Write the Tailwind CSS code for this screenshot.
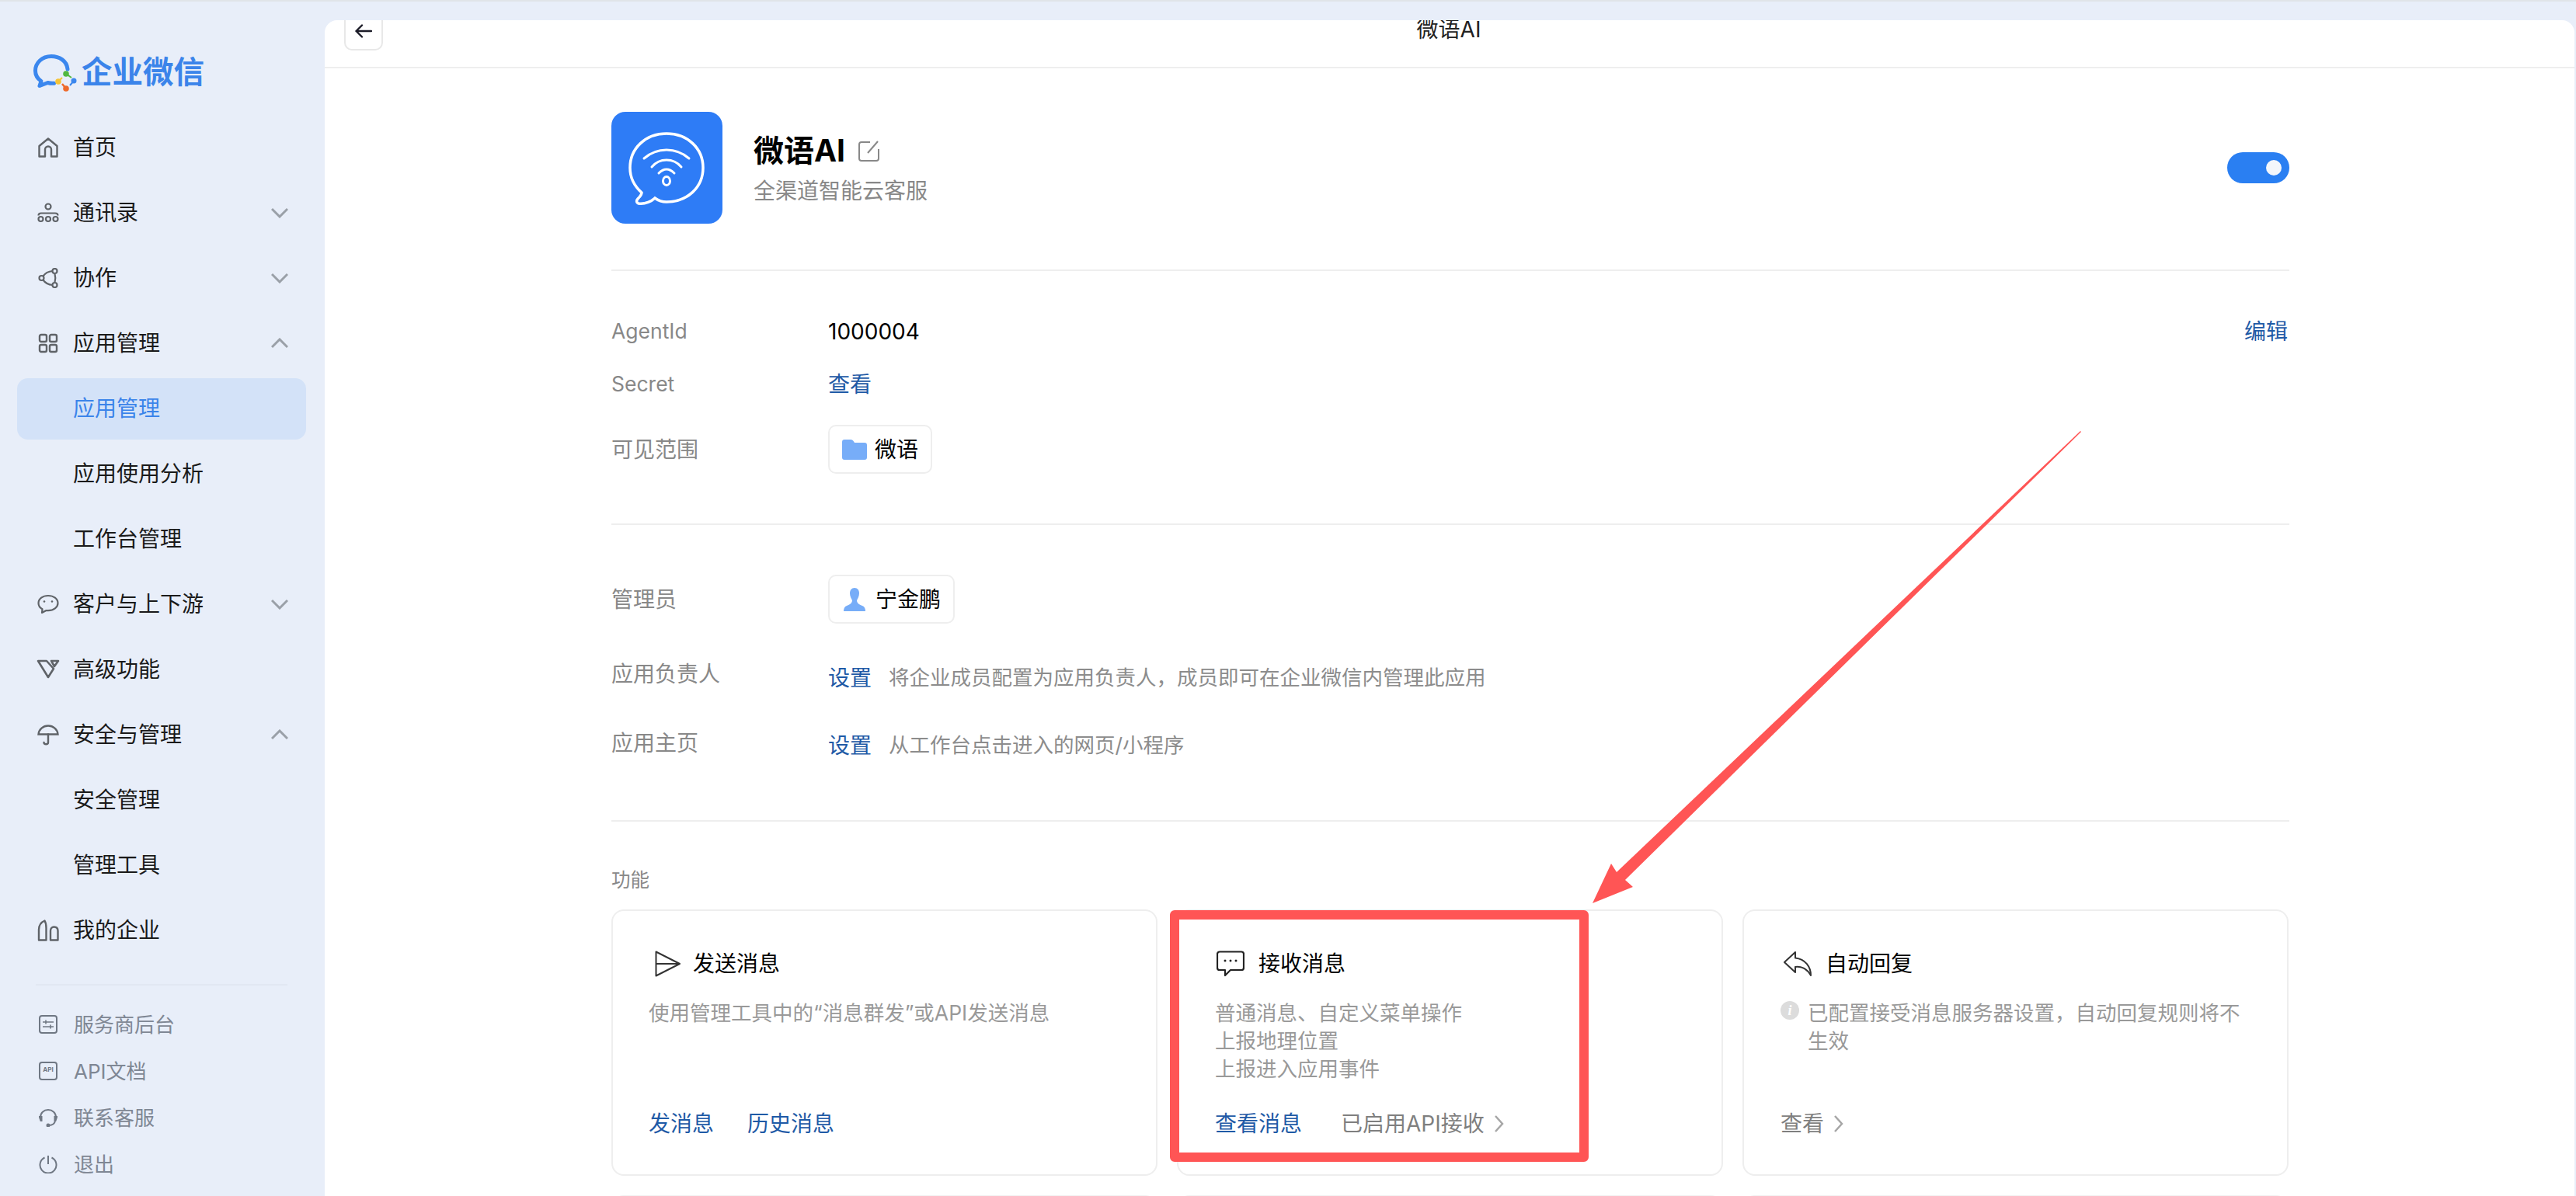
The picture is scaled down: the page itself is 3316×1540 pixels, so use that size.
<!DOCTYPE html>
<html lang="zh-CN">
<head>
    <meta charset="UTF-8">
    <title>企业微信 - 微语AI</title>
    <script src="https://cdn.jsdelivr.net/npm/@tailwindcss/browser@4"></script>
</head>
<body class="w-[3316px] h-[1540px] overflow-hidden relative bg-[#e8eef9] text-[#1a1a1a] [font-family:Inter,'Noto_Sans_CJK_SC',sans-serif]">
    <div class="h-[2px] bg-[#e0e4e8]"></div>
    <div class="flex h-[1538px]">

        <!-- sidebar -->
        <aside class="w-[418px] shrink-0">
            <div class="h-[146px] pl-[40px] pt-[66px] flex items-start">
                <svg class="w-[60px] h-[52px] shrink-0" viewBox="0 0 60 52" fill="none">
                    <path d="M47 21C46 10 36 4.500 26 4.500C14 4.500 5.500 13 5.500 23C5.500 29 8.500 33.500 13 36.500L11 42.500L21.500 38.500C24 39.200 27 39.500 29.500 39.200" stroke="#3b87ee" stroke-width="5" stroke-linecap="round" stroke-linejoin="round"/>
                    <path d="M45 27L52 32" stroke="#52b840" stroke-width="2"/><circle cx="45" cy="27" r="3.800" fill="#52b840"/>
                    <path d="M55 36L50 42" stroke="#3b87ee" stroke-width="2"/><circle cx="55" cy="36" r="3.500" fill="#3b87ee"/>
                    <path d="M35 37L40 32" stroke="#f5c438" stroke-width="2"/><circle cx="35" cy="37" r="3.800" fill="#f5c438"/>
                    <path d="M45 46L40 40" stroke="#ee6a2b" stroke-width="2.500"/><circle cx="45" cy="46" r="3.800" fill="#ee6a2b"/>
                </svg>
                <span class="ml-[5px] text-[39.500px] leading-[50px] font-semibold text-[#3b84ea]">企业微信</span>
            </div>

            <nav class="text-[28px]">
                <a class="h-[84px] pl-[49px] flex items-center gap-[19px]">
                    <svg class="w-[26px] h-[26px]" viewBox="0 0 26 26" fill="none" stroke="#5f6368" stroke-width="2.400" stroke-linejoin="round"><path d="M1.500 11L13 1.500L24.500 11V24.500H17V15.500A4 4 0 0 0 9 15.500V24.500H1.500Z"/></svg>
                    <span>首页</span>
                </a>
                <a class="h-[84px] pl-[49px] pr-[47px] flex items-center gap-[19px]">
                    <svg class="w-[28px] h-[26px] -ml-[1px] -mr-[1px]" viewBox="0 0 28 26" fill="none" stroke="#5f6368" stroke-width="2.200"><circle cx="14" cy="5" r="3.500"/><circle cx="4.500" cy="21" r="3"/><circle cx="14" cy="21" r="3"/><circle cx="23.500" cy="21" r="3"/><path d="M1.500 16.500C1.500 14.500 3 13.500 5 13.500H23C25 13.500 26.500 14.500 26.500 16.500"/></svg>
                    <span>通讯录</span>
                    <svg class="w-[22px] h-[14px] ml-auto" viewBox="0 0 22 14" fill="none" stroke="#9aa0a8" stroke-width="3"><path d="M1 2L11 12L21 2"/></svg>
                </a>
                <a class="h-[84px] pl-[49px] pr-[47px] flex items-center gap-[19px]">
                    <svg class="w-[26px] h-[26px]" viewBox="0 0 26 26" fill="none" stroke="#5f6368" stroke-width="2.200"><circle cx="4.500" cy="13" r="3"/><circle cx="21.500" cy="4" r="3"/><circle cx="21.500" cy="22" r="3"/><path d="M6.500 10.500C9 7 13 4.500 18.500 4M6.500 15.500C9 19 13 21.500 18.500 22M21.500 7.500C22.500 11 22.500 15 21.500 18.500"/></svg>
                    <span>协作</span>
                    <svg class="w-[22px] h-[14px] ml-auto" viewBox="0 0 22 14" fill="none" stroke="#9aa0a8" stroke-width="3"><path d="M1 2L11 12L21 2"/></svg>
                </a>
                <a class="h-[84px] pl-[49px] pr-[47px] flex items-center gap-[19px]">
                    <svg class="w-[26px] h-[26px]" viewBox="0 0 26 26" fill="none" stroke="#5f6368" stroke-width="2.400"><rect x="2" y="2" width="9" height="9" rx="2"/><rect x="15" y="2" width="9" height="9" rx="2"/><rect x="2" y="15" width="9" height="9" rx="2"/><rect x="15" y="15" width="9" height="9" rx="2"/></svg>
                    <span>应用管理</span>
                    <svg class="w-[22px] h-[14px] ml-auto" viewBox="0 0 22 14" fill="none" stroke="#9aa0a8" stroke-width="3"><path d="M1 12L11 2L21 12"/></svg>
                </a>
                <div class="h-[84px] flex items-center">
                    <a class="w-[372px] h-[79px] ml-[22px] pl-[72px] flex items-center rounded-[14px] bg-[#d3e2f8] text-[#3b84ea]">应用管理</a>
                </div>
                <a class="h-[84px] pl-[94px] flex items-center">应用使用分析</a>
                <a class="h-[84px] pl-[94px] flex items-center">工作台管理</a>
                <a class="h-[84px] pl-[49px] pr-[47px] flex items-center gap-[19px]">
                    <svg class="w-[28px] h-[26px] -ml-[1px] -mr-[1px]" viewBox="0 0 28 26" fill="none" stroke="#5f6368" stroke-width="2.200" stroke-linejoin="round"><path d="M14 2C7 2 1.500 6 1.500 11.500C1.500 15 3.800 17.800 6.500 19.300L6 24L11.500 21C12.300 21.100 13.100 21.200 14 21.200C21 21.200 26.500 17 26.500 11.500C26.500 6 21 2 14 2Z"/><circle cx="9" cy="9.500" r="1.300" fill="#5f6368" stroke="none"/><circle cx="19" cy="9.500" r="1.300" fill="#5f6368" stroke="none"/></svg>
                    <span>客户与上下游</span>
                    <svg class="w-[22px] h-[14px] ml-auto" viewBox="0 0 22 14" fill="none" stroke="#9aa0a8" stroke-width="3"><path d="M1 2L11 12L21 2"/></svg>
                </a>
                <a class="h-[84px] pl-[49px] flex items-center gap-[19px]">
                    <svg class="w-[30px] h-[26px] -ml-[2px] -mr-[2px]" viewBox="0 0 30 26" fill="none" stroke="#5f6368" stroke-width="2.600" stroke-linejoin="round"><path d="M2 2H13L22 12L15 23ZM19 2H28L23 9Z"/></svg>
                    <span>高级功能</span>
                </a>
                <a class="h-[84px] pl-[49px] pr-[47px] flex items-center gap-[19px]">
                    <svg class="w-[28px] h-[28px] -ml-[1px] -mr-[1px]" viewBox="0 0 28 28" fill="none" stroke="#5f6368" stroke-width="2.400" stroke-linecap="round"><path d="M1.500 13.500C2 7 7.500 2.500 14 2.500C20.500 2.500 26 7 26.500 13.500Z"/><path d="M14 13.500V24C14 27 8.500 27 8.500 24"/></svg>
                    <span>安全与管理</span>
                    <svg class="w-[22px] h-[14px] ml-auto" viewBox="0 0 22 14" fill="none" stroke="#9aa0a8" stroke-width="3"><path d="M1 12L11 2L21 12"/></svg>
                </a>
                <a class="h-[84px] pl-[94px] flex items-center">安全管理</a>
                <a class="h-[84px] pl-[94px] flex items-center">管理工具</a>
                <a class="h-[84px] pl-[49px] flex items-center gap-[19px]">
                    <svg class="w-[28px] h-[28px] -ml-[1px] -mr-[1px]" viewBox="0 0 28 28" fill="none" stroke="#5f6368" stroke-width="2.400" stroke-linejoin="round"><path d="M2 26.500V13C2 8 5 3.500 9.500 1.500C11 4 11.500 7 11.500 11V26.500Z"/><path d="M17 26.500V14.500C17 11.500 19 9.500 21.500 9.500C24.500 9.500 26.500 11.500 26.500 14.500V26.500Z"/></svg>
                    <span>我的企业</span>
                </a>
            </nav>

            <div class="h-[2px] mt-[27px] ml-[46px] w-[324px] bg-[#e1e7f2]"></div>

            <div class="mt-[20px] text-[26px] text-[#7f8794]">
                <a class="h-[60px] pl-[50px] flex items-center gap-[21px]">
                    <svg class="w-[24px] h-[24px]" viewBox="0 0 24 24" fill="none" stroke="#6f7783" stroke-width="2"><rect x="1" y="1" width="22" height="22" rx="3"/><path d="M5 9H19M5 15H19M9 6.500V11.500M15 12.500V17.500" stroke-width="1.600"/></svg>
                    <span>服务商后台</span>
                </a>
                <a class="h-[60px] pl-[50px] flex items-center gap-[21px]">
                    <svg class="w-[24px] h-[24px]" viewBox="0 0 24 24" fill="none"><rect x="1" y="1" width="22" height="22" rx="3" stroke="#6f7783" stroke-width="2"/><text x="12" y="13" text-anchor="middle" font-size="8" font-weight="700" fill="#6f7783" font-family="Inter">API</text></svg>
                    <span>API文档</span>
                </a>
                <a class="h-[60px] pl-[50px] flex items-center gap-[21px]">
                    <svg class="w-[24px] h-[24px]" viewBox="0 0 24 24" fill="none" stroke="#6f7783" stroke-width="2"><path d="M2 13V11.500C2 6 6.500 2 12 2C17.500 2 22 6 22 11.500V13"/><path d="M0.800 11H3.500V16H2.500Z M23.200 11H20.500V16H21.500Z" fill="#6f7783"/><path d="M21 16C20.500 20.500 18 22 12.500 22" /><circle cx="12" cy="22" r="1.500" fill="#6f7783"/></svg>
                    <span>联系客服</span>
                </a>
                <a class="h-[60px] pl-[50px] flex items-center gap-[21px]">
                    <svg class="w-[24px] h-[24px]" viewBox="0 0 24 24" fill="none" stroke="#6f7783" stroke-width="2"><path d="M7.500 3.500A10.500 10.500 0 1 0 16.500 3.500"/><path d="M12 1V12"/></svg>
                    <span>退出</span>
                </a>
            </div>
        </aside>

        <!-- main panel -->
        <main class="w-[2896px] mt-[24px] rounded-t-[16px] bg-white overflow-hidden">
            <header class="h-[62px] border-b-2 border-[#eeeeee] grid grid-cols-[1fr_auto_1fr] overflow-hidden">
                <div>
                    <button class="w-[50px] h-[50px] -mt-[11px] ml-[25px] border-2 border-[#e8e8e8] rounded-[10px] flex items-center justify-center">
                        <svg class="w-[22px] h-[18px]" viewBox="0 0 22 18" fill="none" stroke="#1c1c28" stroke-width="2.400" stroke-linecap="round" stroke-linejoin="round"><path d="M9 1.500L1.500 9L9 16.500M1.500 9H21"/></svg>
                    </button>
                </div>
                <div class="text-[28px] leading-[28px] -mt-[2px] -ml-[2px] text-[#222222]">微语AI</div>
                <div></div>
            </header>

            <div class="w-[2160px] ml-[369px]">
                <!-- app head -->
                <section class="pt-[56px] pb-[59px] border-b-2 border-[#eeeeee] flex items-start">
                    <div class="w-[143px] h-[144px] rounded-[18px] bg-[#2e7cf6]">
                        <svg class="w-[143px] h-[144px]" viewBox="0 0 143 144" fill="none" stroke="#ffffff" stroke-linecap="round" stroke-width="3">
                            <path d="M24 72C24 47 44 28 71 28C98 28 118 47 118 72C118 97 98 116 71 116C64 116 60 114 56 111C52 115 44 119 35 118C32 117 32 114 34 112C37 109 39 106 39 104C30 96 24 85 24 72Z" stroke-width="3.500"/>
                            <path d="M42 60C50 53 60 49 71 49C82 49 92 53 100 60"/>
                            <path d="M52 71C57 65 64 62 71 62C78 62 85 65 90 71"/>
                            <path d="M61 79C64 76 67 74 71 74C75 74 78 76 81 79"/>
                            <ellipse cx="71" cy="89" rx="4.500" ry="5.500"/>
                        </svg>
                    </div>
                    <div class="ml-[40px] pt-[28px]">
                        <div class="flex items-center h-[44px]">
                            <span class="text-[39px] leading-[44px] font-bold text-black">微语AI</span>
                            <svg class="ml-[17px] w-[27px] h-[27px]" viewBox="0 0 27 27" fill="none" stroke="#888888" stroke-width="2"><path d="M15 2H4A3 3 0 0 0 1 5V23A3 3 0 0 0 4 26H23A3 3 0 0 0 26 23V11"/><path d="M25 1L12 16"/></svg>
                        </div>
                        <p class="mt-[12px] text-[28px] leading-[36px] text-[#888888]">全渠道智能云客服</p>
                    </div>
                    <div class="ml-auto mt-[52px] w-[80px] h-[40px] rounded-full bg-[#2a7ff2] flex items-center justify-end pr-[10px]">
                        <div class="w-[20px] h-[20px] rounded-full bg-[#f3f6fb]"></div>
                    </div>
                </section>

                <!-- basic info -->
                <section class="pt-[58px] pb-[64px] border-b-2 border-[#eeeeee] text-[28px]">
                    <div class="h-[40px] flex items-center">
                        <span class="w-[279px] text-[#888888] text-[26.500px]">AgentId</span>
                        <span class="text-black">1000004</span>
                        <a class="ml-auto mr-[2px] text-[#1f5aa6]">编辑</a>
                    </div>
                    <div class="mt-[28px] h-[40px] flex items-center">
                        <span class="w-[279px] text-[#888888] text-[26.500px]">Secret</span>
                        <a class="text-[#1f5aa6]">查看</a>
                    </div>
                    <div class="mt-[32px] h-[63px] flex items-center">
                        <span class="w-[279px] text-[#888888]">可见范围</span>
                        <div class="h-[63px] w-[134px] border-2 border-[#eeeeee] rounded-[10px] flex items-center pl-[16px]">
                            <svg class="w-[32px] h-[26px]" viewBox="0 0 32 26"><path d="M0 3A3 3 0 0 1 3 0H11C13 0 14 1 15 2.500L16 4H29A3 3 0 0 1 32 7V23A3 3 0 0 1 29 26H3A3 3 0 0 1 0 23Z" fill="#77adf8"/></svg>
                            <span class="ml-[10px] text-black">微语</span>
                        </div>
                    </div>
                </section>

                <!-- admin -->
                <section class="pt-[64px] pb-[76px] border-b-2 border-[#eeeeee] text-[28px]">
                    <div class="h-[63px] flex items-center">
                        <span class="w-[279px] text-[#888888]">管理员</span>
                        <div class="h-[63px] w-[163px] border-2 border-[#eeeeee] rounded-[10px] flex items-center pl-[18px]">
                            <svg class="w-[28px] h-[30px]" viewBox="0 0 28 30"><path d="M14 0C18 0 20 3 20 7C20 11 18 14 17 16C17 19 19 21 24 23C27 24 28 27 28 30H0C0 27 1 24 4 23C9 21 11 19 11 16C10 14 8 11 8 7C8 3 10 0 14 0Z" fill="#77adf8"/></svg>
                            <span class="ml-[13px] text-black">宁金鹏</span>
                        </div>
                    </div>
                    <div class="mt-[50px] h-[40px] flex items-center">
                        <span class="w-[279px] mb-[10px] text-[#888888]">应用负责人</span>
                        <a class="text-[#1f5aa6]">设置</a>
                        <span class="ml-[22px] text-[26.500px] text-[#8c8c8c]">将企业成员配置为应用负责人，成员即可在企业微信内管理此应用</span>
                    </div>
                    <div class="mt-[47px] h-[40px] flex items-center">
                        <span class="w-[279px] mb-[6px] text-[#888888]">应用主页</span>
                        <a class="text-[#1f5aa6]">设置</a>
                        <span class="ml-[22px] text-[26.500px] text-[#8c8c8c]">从工作台点击进入的网页/小程序</span>
                    </div>
                </section>

                <!-- features -->
                <div class="mt-[60px] h-[30px] flex items-center text-[24.500px] text-[#888888]">功能</div>
                <div class="mt-[23px] grid grid-cols-[703px_703px_703px] gap-x-[25px]">
                    <div class="h-[343px] border-2 border-[#eeeeee] rounded-[16px] pt-[48px] pb-[45px] pl-[46px] pr-[40px] flex flex-col">
                        <div class="h-[40px] flex items-center">
                            <svg class="ml-[8px] w-[34px] h-[34px]" viewBox="0 0 34 34" fill="none" stroke="#333333" stroke-width="2" stroke-linejoin="round"><path d="M1.500 1.500L32 17L1.500 32.500ZM1.500 17H32"/></svg>
                            <span class="ml-[15px] text-[28px] text-black">发送消息</span>
                        </div>
                        <p class="mt-[25px] text-[26.500px] leading-[36px] text-[#999999]">使用管理工具中的“消息群发”或API发送消息</p>
                        <div class="mt-auto h-[40px] flex items-center gap-[43px] text-[28px] text-[#1f5aa6]">
                            <a>发消息</a><a>历史消息</a>
                        </div>
                    </div>
                    <div class="h-[343px] border-2 border-[#eeeeee] rounded-[16px] pt-[48px] pb-[45px] pl-[47px] pr-[40px] flex flex-col">
                        <div class="h-[40px] flex items-center">
                            <svg class="ml-[2px] w-[36px] h-[34px]" viewBox="0 0 36 34" fill="none" stroke="#222222" stroke-width="2.200" stroke-linejoin="round"><path d="M4 1.500H32A3 3 0 0 1 35 4.500V22A3 3 0 0 1 32 25H18L11 32V25H4A3 3 0 0 1 1 22V4.500A3 3 0 0 1 4 1.500Z"/><circle cx="11" cy="13" r="1.500" fill="#222222" stroke="none"/><circle cx="18" cy="13" r="1.500" fill="#222222" stroke="none"/><circle cx="25" cy="13" r="1.500" fill="#222222" stroke="none"/></svg>
                            <span class="ml-[18px] text-[28px] text-black">接收消息</span>
                        </div>
                        <p class="mt-[25px] text-[26.500px] leading-[36px] text-[#999999]">普通消息、自定义菜单操作<br>上报地理位置<br>上报进入应用事件</p>
                        <div class="mt-auto h-[40px] flex items-center text-[28px]">
                            <a class="text-[#1f5aa6]">查看消息</a>
                            <a class="ml-[50px] text-[#7f7f7f]">已启用API接收</a>
                            <svg class="ml-[12px] w-[13px] h-[24px]" viewBox="0 0 13 24" fill="none" stroke="#a6a6a6" stroke-width="2.500"><path d="M2 2L11 12L2 22"/></svg>
                        </div>
                    </div>
                    <div class="h-[343px] border-2 border-[#eeeeee] rounded-[16px] pt-[48px] pb-[45px] pl-[47px] pr-[40px] flex flex-col">
                        <div class="h-[40px] flex items-center">
                            <svg class="ml-[4px] w-[36px] h-[32px]" viewBox="0 0 36 32" fill="none" stroke="#333333" stroke-width="2" stroke-linejoin="round"><path d="M15 1L1 14L15 27V20C22 19 30 22 35 31C35 20 28 10 15 8.500Z"/></svg>
                            <span class="ml-[18px] text-[28px] text-black">自动回复</span>
                        </div>
                        <div class="mt-[25px] flex items-start text-[26.500px] leading-[36px] text-[#999999]">
                            <span class="w-[24px] h-[24px] mt-[3px] shrink-0 rounded-full bg-[#dcdcdc] flex items-center justify-center text-[18px] leading-[24px] italic font-bold text-white [font-family:'Liberation_Serif',serif]">i</span>
                            <p class="ml-[11px]">已配置接受消息服务器设置，自动回复规则将不生效</p>
                        </div>
                        <div class="mt-auto h-[40px] flex items-center text-[28px]">
                            <a class="text-[#7f7f7f]">查看</a>
                            <svg class="ml-[12px] w-[13px] h-[24px]" viewBox="0 0 13 24" fill="none" stroke="#a6a6a6" stroke-width="2.500"><path d="M2 2L11 12L2 22"/></svg>
                        </div>
                    </div>
                    <div class="mt-[25px] h-[343px] border-2 border-[#f3f3f3] rounded-[16px]"></div>
                    <div class="mt-[25px] h-[343px] border-2 border-[#f3f3f3] rounded-[16px]"></div>
                    <div class="mt-[25px] h-[343px] border-2 border-[#f3f3f3] rounded-[16px]"></div>
                </div>
            </div>
        </main>
    </div>

    <!-- annotation drawn over the screenshot -->
    <svg class="absolute left-0 top-0 w-[3316px] h-[1540px] pointer-events-none" viewBox="0 0 3316 1540" fill="none">
        <path d="M2050 1163L2074 1112L2081 1123L2678 555L2679 556L2092 1133L2102 1142Z" fill="#ff5555"/>
        <rect x="1512" y="1178" width="527" height="312" stroke="#ff5555" stroke-width="12" stroke-linejoin="round"/>
    </svg>
</body>
</html>
